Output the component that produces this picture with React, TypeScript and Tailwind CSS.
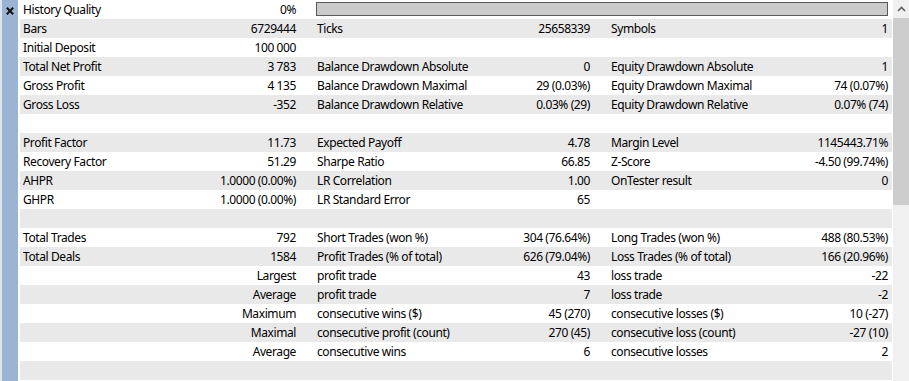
import React from "react";

type Cell = [string, string];
type Row = { left: Cell; mid?: Cell; right?: Cell } | null;

// report rows, null = empty spacer row
const rows: Row[] = [
  { left: ["Bars", "6729444"], mid: ["Ticks", "25658339"], right: ["Symbols", "1"] },
  { left: ["Initial Deposit", "100 000"] },
  { left: ["Total Net Profit", "3 783"], mid: ["Balance Drawdown Absolute", "0"], right: ["Equity Drawdown Absolute", "1"] },
  { left: ["Gross Profit", "4 135"], mid: ["Balance Drawdown Maximal", "29 (0.03%)"], right: ["Equity Drawdown Maximal", "74 (0.07%)"] },
  { left: ["Gross Loss", "-352"], mid: ["Balance Drawdown Relative", "0.03% (29)"], right: ["Equity Drawdown Relative", "0.07% (74)"] },
  null,
  { left: ["Profit Factor", "11.73"], mid: ["Expected Payoff", "4.78"], right: ["Margin Level", "1145443.71%"] },
  { left: ["Recovery Factor", "51.29"], mid: ["Sharpe Ratio", "66.85"], right: ["Z-Score", "-4.50 (99.74%)"] },
  { left: ["AHPR", "1.0000 (0.00%)"], mid: ["LR Correlation", "1.00"], right: ["OnTester result", "0"] },
  { left: ["GHPR", "1.0000 (0.00%)"], mid: ["LR Standard Error", "65"] },
  null,
  { left: ["Total Trades", "792"], mid: ["Short Trades (won %)", "304 (76.64%)"], right: ["Long Trades (won %)", "488 (80.53%)"] },
  { left: ["Total Deals", "1584"], mid: ["Profit Trades (% of total)", "626 (79.04%)"], right: ["Loss Trades (% of total)", "166 (20.96%)"] },
  { left: ["", "Largest"], mid: ["profit trade", "43"], right: ["loss trade", "-22"] },
  { left: ["", "Average"], mid: ["profit trade", "7"], right: ["loss trade", "-2"] },
  { left: ["", "Maximum"], mid: ["consecutive wins ($)", "45 (270)"], right: ["consecutive losses ($)", "10 (-27)"] },
  { left: ["", "Maximal"], mid: ["consecutive profit (count)", "270 (45)"], right: ["consecutive loss (count)", "-27 (10)"] },
  { left: ["", "Average"], mid: ["consecutive wins", "6"], right: ["consecutive losses", "2"] },
  null,
];

function Pair({ cell, last }: { cell?: Cell; last?: boolean }) {
  return (
    <div className={`flex justify-between items-center pl-[3px] ${last ? "pr-[4px]" : "pr-[18px]"}`}>
      <span>{cell?.[0]}</span>
      <span>{cell?.[1]}</span>
    </div>
  );
}

export default function App() {
  return (
    <div
      className="flex w-[909px] h-[381px] overflow-hidden bg-white text-[12px] tracking-[-0.4px] text-black"
      style={{ fontFamily: '"Segoe UI", "Noto Sans", sans-serif' }}
    >
      {/* side strip */}
      <div className="flex w-[20px] shrink-0">
        <div className="w-[2px] bg-[#dde5ef]" />
        <div className="w-[16px] bg-[#9cb4d3] flex justify-center pt-[7px]">
          <svg width="8" height="8" viewBox="0 0 8 8">
            <path d="M0.8 0.8 L7.2 7.2 M7.2 0.8 L0.8 7.2" stroke="#111" strokeWidth="2" />
          </svg>
        </div>
      </div>

      {/* table */}
      <div className="w-[872px] shrink-0">
        <div className="grid grid-cols-[294px_294px_284px] h-[19px] leading-[19px] bg-white">
          <Pair cell={["History Quality", "0%"]} />
          <div className="col-span-2 flex items-start pt-[2px] pl-[2px] pr-[4px]">
            <div className="w-full h-[14px] border border-[#595959] bg-[#cbcbcb]" />
          </div>
        </div>
        {rows.map((r, i) => (
          <div
            key={i}
            className={`grid grid-cols-[294px_294px_284px] h-[19px] leading-[19px] ${i % 2 === 0 ? "bg-[#e9e9e9]" : "bg-white"}`}
          >
            {r && (
              <>
                <Pair cell={r.left} />
                <Pair cell={r.mid} />
                <Pair cell={r.right} last />
              </>
            )}
          </div>
        ))}
      </div>

      {/* scrollbar */}
      <div className="ml-[1px] flex-1 bg-[#f0f0f0] flex flex-col">
        <div className="h-[18px] flex justify-center items-center">
          <svg width="9" height="6" viewBox="0 0 9 6">
            <path d="M1 5 L4.5 1.5 L8 5" stroke="#606060" strokeWidth="1.6" fill="none" />
          </svg>
        </div>
        <div className="h-[187px] bg-[#cdcdcd]" />
      </div>
    </div>
  );
}
